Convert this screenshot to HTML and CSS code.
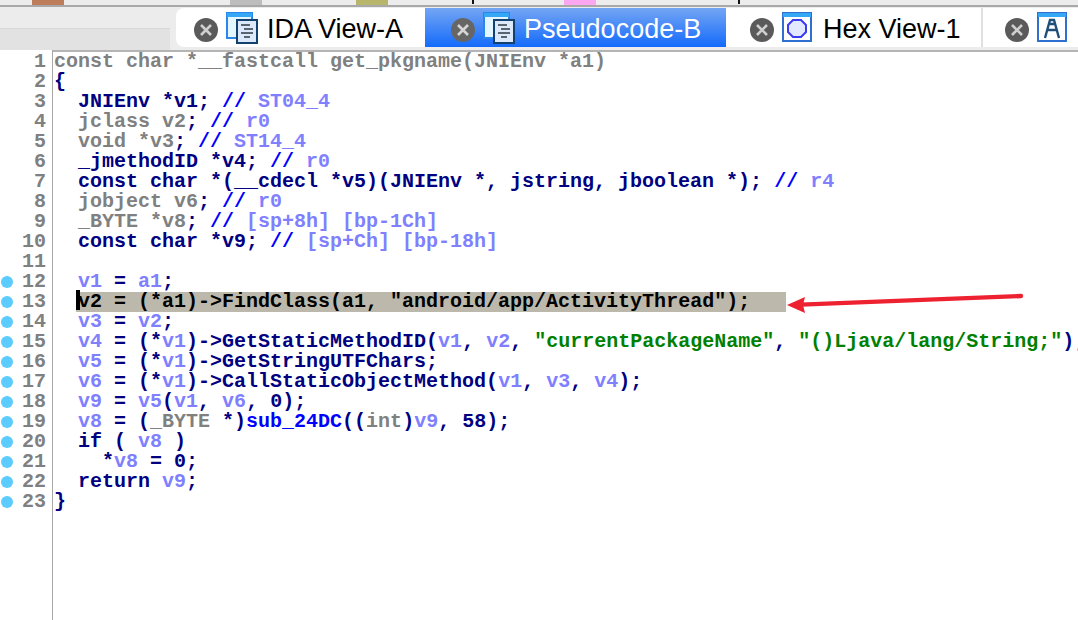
FILE: index.html
```html
<!DOCTYPE html>
<html lang="en">
<head>
<meta charset="utf-8">
<title>Pseudocode-B</title>
<link rel="stylesheet" href="styles.css">
</head>
<body>
<div class="colorstrip">
  <span class="swatch s-brown"></span><span class="swatch s-grey"></span><span class="swatch s-olive"></span><span class="tick t-one"></span><span class="swatch s-pink"></span><span class="tick t-two"></span>
</div>
<div class="tabbar">
  <div class="side"></div>
  <div class="tabs">
    <div class="tab tab-first"><svg class="x" viewBox="0 0 24 24"><circle cx="12" cy="12" r="12" fill="#5a5a5a"/><path d="M7 7l10 10M17 7L7 17" stroke="#cfcfcf" stroke-width="2.6"/></svg><svg class="ico" viewBox="0 0 32 32"><rect x="1" y="1" width="25" height="25" fill="#e4f6ff" stroke="#2a86ea" stroke-width="2"/><rect x="1" y="1" width="25" height="4" fill="#35a8f5"/><rect x="11" y="8" width="20" height="23" fill="#dbe9fa" stroke="#12406f" stroke-width="2"/><path d="M15 13h9M18 17h9M15 21h12M18 25h6" stroke="#5a6570" stroke-width="1.8"/></svg><span>IDA View-A</span></div>
    <div class="tab tab-active"><svg class="x" viewBox="0 0 24 24"><circle cx="12" cy="12" r="12" fill="#666"/><path d="M7 7l10 10M17 7L7 17" stroke="#d6d6d6" stroke-width="2.6"/></svg><svg class="ico" viewBox="0 0 32 32"><rect x="1" y="1" width="25" height="25" fill="#e4f6ff" stroke="#2a86ea" stroke-width="2"/><rect x="1" y="1" width="25" height="4" fill="#35a8f5"/><rect x="11" y="8" width="20" height="23" fill="#dbe9fa" stroke="#12406f" stroke-width="2"/><path d="M15 13h9M18 17h9M15 21h12M18 25h6" stroke="#5a6570" stroke-width="1.8"/></svg><span>Pseudocode-B</span></div>
    <div class="tab tab-hex"><svg class="x" viewBox="0 0 24 24"><circle cx="12" cy="12" r="12" fill="#5a5a5a"/><path d="M7 7l10 10M17 7L7 17" stroke="#cfcfcf" stroke-width="2.6"/></svg><svg class="ico ico-sq" viewBox="0 0 30 30"><rect x="1" y="1" width="28" height="28" fill="#fff" stroke="#2f6fd0" stroke-width="2"/><rect x="1" y="1" width="28" height="4" fill="#35a8f5"/><path d="M11 8h8l5 5v7l-5 5h-8l-5-5v-7z" fill="#e2e8ff" stroke="#3b3bf0" stroke-width="2"/></svg><span>Hex View-1</span></div>
    <div class="tab tab-last"><svg class="x" viewBox="0 0 24 24"><circle cx="12" cy="12" r="12" fill="#5a5a5a"/><path d="M7 7l10 10M17 7L7 17" stroke="#cfcfcf" stroke-width="2.6"/></svg><svg class="ico ico-sq" viewBox="0 0 30 30"><rect x="1" y="1" width="28" height="28" fill="#fff" stroke="#2f6fd0" stroke-width="2"/><rect x="1" y="1" width="28" height="4" fill="#35a8f5"/><path d="M8 26l5-18h4l5 18M11 18h8M12 12h6" fill="none" stroke="#1d4f7a" stroke-width="2.4"/></svg></div>
  </div>
</div>
<main class="editor">
  <div class="gutter">
    <div class="ln">1</div><div class="ln">2</div><div class="ln">3</div><div class="ln">4</div><div class="ln">5</div><div class="ln">6</div><div class="ln">7</div><div class="ln">8</div><div class="ln">9</div><div class="ln">10</div><div class="ln">11</div>
    <div class="ln dot">12</div><div class="ln dot">13</div><div class="ln dot">14</div><div class="ln dot">15</div><div class="ln dot">16</div><div class="ln dot">17</div><div class="ln dot">18</div><div class="ln dot">19</div><div class="ln dot">20</div><div class="ln dot">21</div><div class="ln dot">22</div><div class="ln dot">23</div>
  </div>
  <div class="code">
    <div class="line"><i>const char *__fastcall get_pkgname(JNIEnv *a1)</i></div>
    <div class="line">{</div>
    <div class="line">  JNIEnv *v1; <b>//</b> <u>ST04_4</u></div>
    <div class="line">  <i>jclass v2</i>; <b>//</b> <u>r0</u></div>
    <div class="line">  <i>void *v3</i>; <b>//</b> <u>ST14_4</u></div>
    <div class="line">  _jmethodID *v4; <b>//</b> <u>r0</u></div>
    <div class="line">  const char *(__cdecl *v5)(JNIEnv *, jstring, jboolean *); <b>//</b> <u>r4</u></div>
    <div class="line">  <i>jobject v6</i>; <b>//</b> <u>r0</u></div>
    <div class="line">  <i>_BYTE *v8</i>; <b>//</b> <u>[sp+8h] [bp-1Ch]</u></div>
    <div class="line">  const char *v9; <b>//</b> <u>[sp+Ch] [bp-18h]</u></div>
    <div class="line"> </div>
    <div class="line">  <u>v1</u> = <u>a1</u>;</div>
    <div class="line">  <span class="hl"><span class="caret">v</span>2 = (*a1)-&gt;FindClass(a1, "android/app/ActivityThread");</span></div>
    <div class="line">  <u>v3</u> = <u>v2</u>;</div>
    <div class="line">  <u>v4</u> = (*<u>v1</u>)-&gt;GetStaticMethodID(<u>v1</u>, <u>v2</u>, <em>"currentPackageName"</em>, <em>"()Ljava/lang/String;"</em>);</div>
    <div class="line">  <u>v5</u> = (*<u>v1</u>)-&gt;GetStringUTFChars;</div>
    <div class="line">  <u>v6</u> = (*<u>v1</u>)-&gt;CallStaticObjectMethod(<u>v1</u>, <u>v3</u>, <u>v4</u>);</div>
    <div class="line">  <u>v9</u> = <u>v5</u>(<u>v1</u>, <u>v6</u>, 0);</div>
    <div class="line">  <u>v8</u> = (<i>_BYTE</i> *)<b>sub_24DC</b>((<i>int</i>)<u>v9</u>, 58);</div>
    <div class="line">  if ( <u>v8</u> )</div>
    <div class="line">    *<u>v8</u> = 0;</div>
    <div class="line">  return <u>v9</u>;</div>
    <div class="line">}</div>
  </div>
  <svg class="arrow" viewBox="0 0 245 28"><path d="M16 14.6 L236 6" stroke="#ee2130" stroke-width="4.4" stroke-linecap="round" fill="none"/><path d="M2 15 L20 7 L18 15 L20 23 Z" fill="#ee2130"/></svg>
</main>
</body>
</html>
```
FILE: styles.css
```css
* { box-sizing: border-box; }
html, body { margin: 0; padding: 0; width: 1078px; height: 620px; overflow: hidden; background: #fff; }
.colorstrip { height: 7px; background: #ececec; border-bottom: 2px solid #a8a8a8; display: flex; }
.swatch { display: block; height: 5px; width: 32px; }
.tick { display: block; height: 4px; width: 2px; background: #111; }
.s-brown { background: #bd7c5a; margin-left: 32px; }
.s-grey { background: #bdbdbd; margin-left: 166px; }
.s-olive { background: #b7b66c; margin-left: 94px; }
.t-one { margin-left: 84px; }
.s-pink { background: #fba6f0; margin-left: 90px; }
.t-two { margin-left: 142px; }
.tabbar { height: 43px; background: #ececec; padding: 1px 0 0 176px; position: relative; }
.side { position: absolute; left: 0; top: 21px; width: 170px; height: 22px; background: #e2e2e2; border-top: 1px solid #d8d8d8; }
.tabs { display: flex; height: 39px; }
.tab { display: flex; align-items: center; height: 39px; padding-top: 4px; background: #fff; font: 27px "Liberation Sans", Arial, sans-serif; color: #000; }
.tab-first { width: 250px; padding-left: 18px; border-radius: 8px 0 0 8px; }
.tab-active { width: 302px; padding-left: 26px; background: linear-gradient(#74a5f4, #136bfb); color: #fff; }
.tab-hex { width: 258px; padding-left: 24px; border-right: 2px solid #e0e0e0; }
.tab-last { flex: 1; padding-left: 22px; }
.x { width: 24px; height: 24px; flex: none; }
.ico { width: 32px; height: 32px; margin: -4px 9px 0 8px; flex: none; }
.ico-sq { width: 30px; height: 30px; margin: -6px 11px 0 8px; }
.editor { position: relative; display: flex; height: 570px; overflow: hidden; font: bold 20px/20px "Liberation Mono", "Courier New", monospace; color: #000080; }
.gutter { width: 53px; border-right: 1px solid #a8a8a8; padding-top: 2px; flex: none; }
.ln { text-align: right; padding-right: 6px; color: #808080; height: 20px; position: relative; }
.dot::before { content: ""; position: absolute; left: 1px; top: 4px; width: 12px; height: 12px; border-radius: 50%; background: #5ccbff; }
.code { flex: 1; border-top: 2px solid #b4b4b4; padding-left: 1px; min-width: 0; }
.line { height: 20px; white-space: pre; }
.code i { font-style: normal; color: #808080; }
.code u { text-decoration: none; color: #8080ff; }
.code b { font-weight: bold; color: #0000ff; }
.code em { font-style: normal; color: #008000; }
.hl { background: #bcb8ab; color: #000; display: inline-block; height: 20px; width: 710px; margin-left: -2px; padding-left: 2px; vertical-align: top; }
.caret { position: relative; }
.caret::before { content: ""; position: absolute; left: -2px; top: 0; width: 4px; height: 20px; background: #000; }
.arrow { position: absolute; left: 785px; top: 240px; width: 245px; height: 28px; }
```
